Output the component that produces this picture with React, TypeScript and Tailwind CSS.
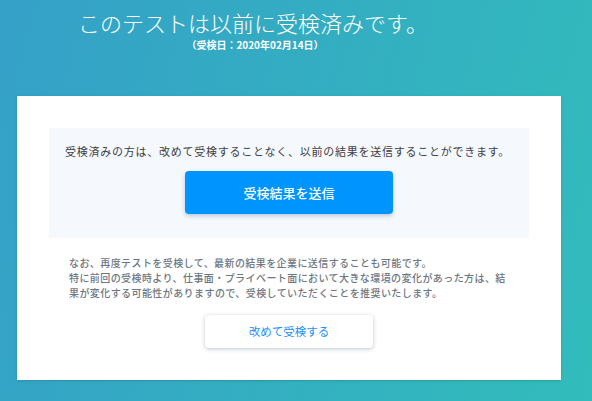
const FONT = { fontFamily: '"Noto Sans CJK JP", "Noto Sans", sans-serif' };

export default function App() {
  return (
    <div
      className="w-full h-[401px] overflow-hidden bg-linear-[105deg] from-[#35a0c8] to-[#32bcbb]"
      style={FONT}
    >
      {/* Heading */}
      <div className="flex flex-col items-center pt-[8px] pr-[86px]">
        <h1 className="text-[22px] leading-[28px] font-light text-white">
          このテストは以前に受検済みです。
        </h1>
        <p className="ml-1 mt-[2px] text-[10px] leading-[14px] font-bold text-white">
          （受検日：2020年02月14日）
        </p>
      </div>

      {/* Card */}
      <div className="ml-[17px] mt-[44px] w-[544px] bg-white p-8 shadow-sm">
        <div className="bg-[#f5f9fd] px-4 pt-[15px] pb-6">
          <p className="text-[11px] leading-4 tracking-[0.75px] text-[#3d4044]">
            受検済みの方は、改めて受検することなく、以前の結果を送信することができます。
          </p>
          <div className="mt-3 flex justify-center">
            <button className="w-[208px] h-[43px] rounded-[4px] bg-[#0094ff] text-white text-[13px] font-medium shadow-[0_2px_4px_rgba(0,60,120,0.25)]">
              受検結果を送信
            </button>
          </div>
        </div>

        <div className="mt-[17px] px-5 whitespace-nowrap text-[10px] leading-[15px] tracking-[0.42px] font-medium text-[#6e7681]">
          <p>なお、再度テストを受検して、最新の結果を企業に送信することも可能です。</p>
          <p>特に前回の受検時より、仕事面・プライベート面において大きな環境の変化があった方は、結</p>
          <p>果が変化する可能性がありますので、受検していただくことを推奨いたします。</p>
        </div>

        <div className="mt-[15px] flex justify-center">
          <button className="w-[168px] h-[33px] rounded-[4px] bg-white text-[#1a8fff] text-[11.5px] shadow-[0_1px_4px_rgba(40,60,90,0.3)]">
            改めて受検する
          </button>
        </div>
      </div>
    </div>
  );
}
